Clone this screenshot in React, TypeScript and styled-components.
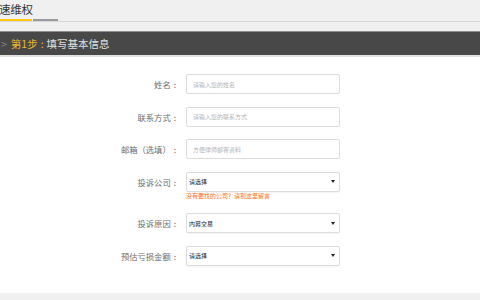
import React from 'react';
import styled, { createGlobalStyle } from 'styled-components';

//
// Styled Components

const GlobalStyle = createGlobalStyle`
  html, body {
    margin: 0;
    padding: 0;
    background: #ffffff;
    font-family: "Noto Sans CJK SC", "Noto Sans", "Liberation Sans", sans-serif;
  }
  * {
    box-sizing: border-box;
  }
`;

const Page = styled.div`
  width: 480px;
  height: 300px;
  overflow: hidden;
  display: flex;
  flex-direction: column;
  background: #ffffff;
`;

const Header = styled.div`
  height: 31px;
  background: #f0f0f0;
  flex-shrink: 0;
`;

const TitleRow = styled.div`
  height: 22px;
  display: flex;
  align-items: flex-end;
  border-bottom: 1px solid #d6d6d6;
`;

const Tab = styled.div<{ active?: boolean }>`
  height: 21px;
  width: ${p => (p.active ? '32px' : '25px')};
  margin-left: ${p => (p.active ? '0' : '1px')};
  border-bottom: 2px solid ${p => (p.active ? '#ffc90e' : '#9a9a9a')};
  color: #333333;
  font-size: 11.5px;
  line-height: 18px;
  white-space: nowrap;
  overflow: visible;
`;

const TitleText = styled.span`
  margin-left: -1px;
  letter-spacing: -0.3px;
`;

const StepBar = styled.div`
  height: 26px;
  flex-shrink: 0;
  background: #484848;
  border-top: 1px solid #8e8e8e;
  border-bottom: 2px solid #e2e2e2;
  display: flex;
  align-items: center;
  padding-left: 1px;
  font-size: 10.5px;
  color: #e0e0e0;
`;

const Chevron = styled.span`
  color: #8a8a8a;
  margin-right: 4px;
`;

const StepNo = styled.span`
  color: #e7b72b;
`;

const Colon = styled.span<{ gap: number }>`
  margin: 0 ${p => p.gap}px;
`;

const Form = styled.div`
  flex: 1;
  padding-top: 17px;
  display: flex;
  flex-direction: column;
  gap: 12.5px;
`;

const Row = styled.div`
  display: grid;
  grid-template-columns: 179px 154px;
  column-gap: 7px;
  align-items: start;
`;

const Label = styled.div`
  height: 20px;
  line-height: 20px;
  text-align: right;
  font-size: 8.3px;
  color: #6e6e6e;
  white-space: nowrap;
`;

const Control = styled.div`
  display: flex;
  flex-direction: column;
`;

const TextInput = styled.input`
  display: block;
  width: 154px;
  height: 20px;
  border: 1px solid #dcdcdc;
  border-radius: 2px;
  padding: 0 6px;
  font-family: inherit;
  font-size: 6px;
  color: #333333;
  outline: none;
  background: #ffffff;
  &::placeholder {
    color: #b4b4b4;
  }
`;

const SelectWrap = styled.div`
  position: relative;
  width: 154px;
  height: 20px;
`;

const Select = styled.select`
  display: block;
  appearance: none;
  -webkit-appearance: none;
  width: 100%;
  height: 100%;
  margin: 0;
  border: 1px solid #dcdcdc;
  border-radius: 2px;
  padding: 0 2px;
  font-family: inherit;
  font-size: 6px;
  color: #222222;
  background: #ffffff;
  outline: none;
  box-shadow: 0 1px 1px rgba(0, 0, 0, 0.04);
`;

const Arrow = styled.span`
  position: absolute;
  right: 5px;
  top: 8.5px;
  width: 0;
  height: 0;
  border-left: 2px solid transparent;
  border-right: 2px solid transparent;
  border-top: 3px solid #222222;
  pointer-events: none;
`;

const Hint = styled.div`
  font-size: 6px;
  line-height: 8.5px;
  color: #ff6a28;
  padding-top: 0.5px;
  white-space: nowrap;
`;

const Footer = styled.div`
  height: 7px;
  flex-shrink: 0;
  background: #f0f0f0;
`;

//
// Main Component

type Field = {
  label: string;
  kind: 'input' | 'select';
  value: string;
  hint?: string;
};

const fields: Field[] = [
  { label: '姓名', kind: 'input', value: '请输入您的姓名' },
  { label: '联系方式', kind: 'input', value: '请输入您的联系方式' },
  { label: '邮箱（选填）', kind: 'input', value: '方便律师邮寄资料' },
  {
    label: '投诉公司',
    kind: 'select',
    value: '请选择',
    hint: '没有要找的公司？请到这里留言',
  },
  { label: '投诉原因', kind: 'select', value: '内幕交易' },
  { label: '预估亏损金额', kind: 'select', value: '请选择' },
];

export default function App(): JSX.Element {
  return (
    <Page>
      <GlobalStyle />
      <Header>
        <TitleRow>
          <Tab active>
            <TitleText>速维权</TitleText>
          </Tab>
          <Tab />
        </TitleRow>
      </Header>
      <StepBar>
        <Chevron>&gt;</Chevron>
        <StepNo>
          第1步<Colon gap={3}>:</Colon>
        </StepNo>
        填写基本信息
      </StepBar>
      <Form>
        {fields.map(f => (
          <Row key={f.label}>
            <Label>
              {f.label}
              <Colon gap={3}>:</Colon>
            </Label>
            <Control>
              {f.kind === 'input' ? (
                <TextInput placeholder={f.value} />
              ) : (
                <SelectWrap>
                  <Select defaultValue={f.value}>
                    <option>{f.value}</option>
                  </Select>
                  <Arrow />
                </SelectWrap>
              )}
              {f.hint && <Hint>{f.hint}</Hint>}
            </Control>
          </Row>
        ))}
      </Form>
      <Footer />
    </Page>
  );
}
